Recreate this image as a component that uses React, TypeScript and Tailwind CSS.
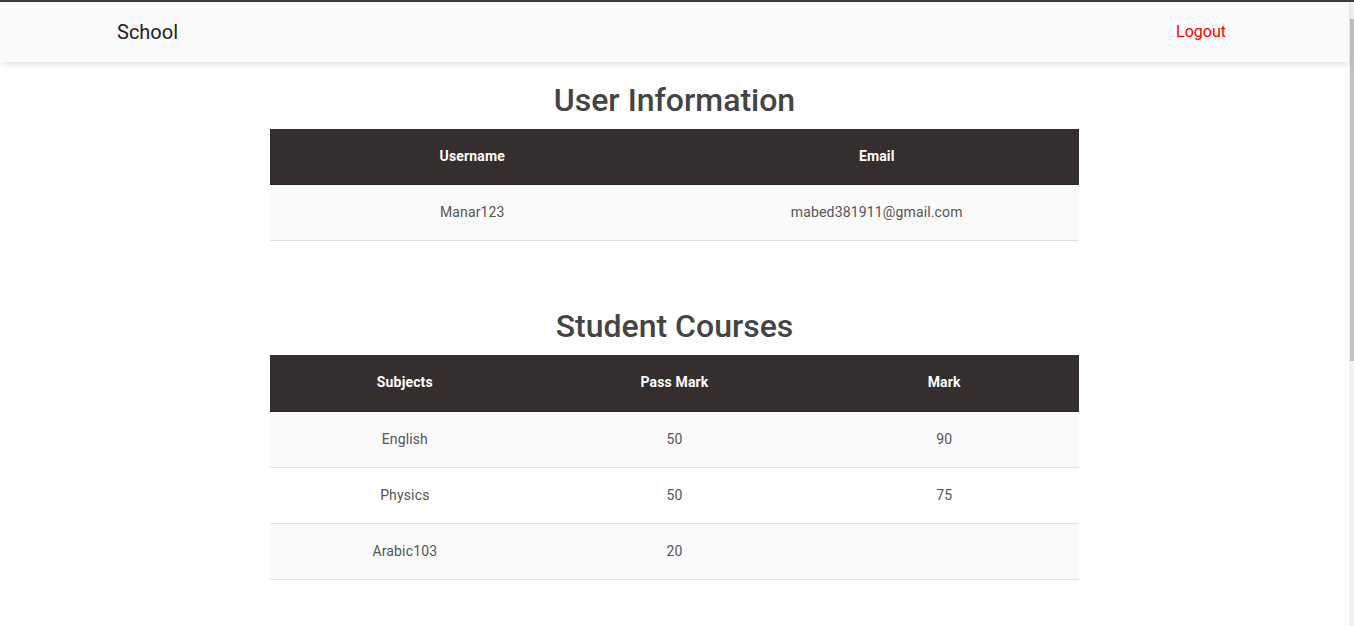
import React from "react";

const font = { fontFamily: "Roboto, 'Noto Sans', Arial, sans-serif" };

function Table({ headers, rows, tall }: { headers: string[]; rows: string[][]; tall?: boolean }) {
  return (
    <table className="w-[809px] mx-auto table-fixed border-separate border-spacing-0 text-[14px] tracking-[0.01071em]">
      <thead>
        <tr className="bg-[#342e2e]">
          {headers.map((h) => (
            <th
              key={h}
              className={`${tall ? "h-[57px] pb-[2px]" : "h-[56px] pb-[1px]"} text-white font-bold text-center px-4 border-b border-[#2c2626]`}
            >
              {h}
            </th>
          ))}
        </tr>
      </thead>
      <tbody>
        {rows.map((r, i) => (
          <tr key={i} className={i % 2 === 0 ? "bg-[#fafafa]" : "bg-white"}>
            {r.map((c, j) => (
              <td key={j} className="h-[56px] text-center text-[#555555] px-4 border-b border-[#e0e0e0]">
                {c}
              </td>
            ))}
          </tr>
        ))}
      </tbody>
    </table>
  );
}

export default function App() {
  return (
    <div className="w-[1354px] h-[626px] overflow-hidden bg-white flex flex-col" style={font}>
      <div className="h-[2px] bg-[#3c3c3c] shrink-0" />
      <div className="flex flex-1 min-h-0">
        <div className="flex-1 flex flex-col">
          <nav className="h-[60px] bg-[#fafafa] flex items-center justify-between pl-[117px] pr-[123px] shadow-[0_2px_6px_rgba(0,0,0,0.12)] relative z-10 shrink-0">
            <span className="text-[20px] text-[#212121]">School</span>
            <span className="text-[16px] text-[#ff0000]">Logout</span>
          </nav>
          <main className="flex flex-col">
            <h2 className="text-center text-[32px] font-medium text-[#444444] leading-[38px] mt-[19px] mb-[10px]">
              User Information
            </h2>
            <Table headers={["Username", "Email"]} rows={[["Manar123", "mabed381911@gmail.com"]]} />
            <h2 className="text-center text-[32px] font-medium text-[#444444] leading-[38px] mt-[66px] mb-[10px]">
              Student Courses
            </h2>
            <Table
              tall
              headers={["Subjects", "Pass Mark", "Mark"]}
              rows={[
                ["English", "50", "90"],
                ["Physics", "50", "75"],
                ["Arabic103", "20", ""],
              ]}
            />
          </main>
        </div>
        <div className="w-[5px] bg-[#f1f1f1] shrink-0 flex flex-col pt-[17px]">
          <div className="h-[342px] ml-[1px] bg-[#c1c1c1]" />
        </div>
      </div>
    </div>
  );
}
